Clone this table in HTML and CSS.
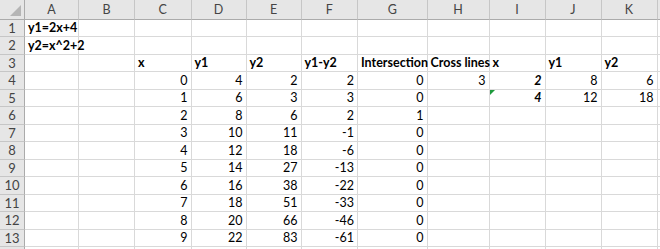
FILE: index.html
```html
<!DOCTYPE html>
<html>
<head>
<meta charset="utf-8">
<link rel="stylesheet" href="styles.css">
</head>
<body>
<div class="sheet">
  <div class="corner"><span class="tri"></span></div>
  <div class="ch">A</div><div class="ch">B</div><div class="ch">C</div><div class="ch">D</div><div class="ch">E</div><div class="ch">F</div><div class="ch">G</div><div class="ch">H</div><div class="ch">I</div><div class="ch">J</div><div class="ch">K</div><div class="ch last"></div>

  <div class="rh">1</div><div class="c b">y1=2x+4</div><div class="c"></div><div class="c"></div><div class="c"></div><div class="c"></div><div class="c"></div><div class="c"></div><div class="c"></div><div class="c"></div><div class="c"></div><div class="c"></div><div class="c"></div>
  <div class="rh">2</div><div class="c b">y2=x^2+2</div><div class="c"></div><div class="c"></div><div class="c"></div><div class="c"></div><div class="c"></div><div class="c"></div><div class="c"></div><div class="c"></div><div class="c"></div><div class="c"></div><div class="c"></div>
  <div class="rh">3</div><div class="c"></div><div class="c"></div><div class="c b">x</div><div class="c b">y1</div><div class="c b">y2</div><div class="c b">y1-y2</div><div class="c b">Intersection</div><div class="c b">Cross lines</div><div class="c b">x</div><div class="c b">y1</div><div class="c b">y2</div><div class="c"></div>
  <div class="rh">4</div><div class="c"></div><div class="c"></div><div class="c n">0</div><div class="c n">4</div><div class="c n">2</div><div class="c n">2</div><div class="c n">0</div><div class="c n">3</div><div class="c n bi">2</div><div class="c n">8</div><div class="c n">6</div><div class="c"></div>
  <div class="rh">5</div><div class="c"></div><div class="c"></div><div class="c n">1</div><div class="c n">6</div><div class="c n">3</div><div class="c n">3</div><div class="c n">0</div><div class="c"></div><div class="c n bi"><span class="flag"></span>4</div><div class="c n">12</div><div class="c n">18</div><div class="c"></div>
  <div class="rh">6</div><div class="c"></div><div class="c"></div><div class="c n">2</div><div class="c n">8</div><div class="c n">6</div><div class="c n">2</div><div class="c n">1</div><div class="c"></div><div class="c"></div><div class="c"></div><div class="c"></div><div class="c"></div>
  <div class="rh">7</div><div class="c"></div><div class="c"></div><div class="c n">3</div><div class="c n">10</div><div class="c n">11</div><div class="c n">-1</div><div class="c n">0</div><div class="c"></div><div class="c"></div><div class="c"></div><div class="c"></div><div class="c"></div>
  <div class="rh">8</div><div class="c"></div><div class="c"></div><div class="c n">4</div><div class="c n">12</div><div class="c n">18</div><div class="c n">-6</div><div class="c n">0</div><div class="c"></div><div class="c"></div><div class="c"></div><div class="c"></div><div class="c"></div>
  <div class="rh">9</div><div class="c"></div><div class="c"></div><div class="c n">5</div><div class="c n">14</div><div class="c n">27</div><div class="c n">-13</div><div class="c n">0</div><div class="c"></div><div class="c"></div><div class="c"></div><div class="c"></div><div class="c"></div>
  <div class="rh">10</div><div class="c"></div><div class="c"></div><div class="c n">6</div><div class="c n">16</div><div class="c n">38</div><div class="c n">-22</div><div class="c n">0</div><div class="c"></div><div class="c"></div><div class="c"></div><div class="c"></div><div class="c"></div>
  <div class="rh">11</div><div class="c"></div><div class="c"></div><div class="c n">7</div><div class="c n">18</div><div class="c n">51</div><div class="c n">-33</div><div class="c n">0</div><div class="c"></div><div class="c"></div><div class="c"></div><div class="c"></div><div class="c"></div>
  <div class="rh">12</div><div class="c"></div><div class="c"></div><div class="c n">8</div><div class="c n">20</div><div class="c n">66</div><div class="c n">-46</div><div class="c n">0</div><div class="c"></div><div class="c"></div><div class="c"></div><div class="c"></div><div class="c"></div>
  <div class="rh">13</div><div class="c"></div><div class="c"></div><div class="c n">9</div><div class="c n">22</div><div class="c n">83</div><div class="c n">-61</div><div class="c n">0</div><div class="c"></div><div class="c"></div><div class="c"></div><div class="c"></div><div class="c"></div>
  <div class="rh"></div><div class="c"></div><div class="c"></div><div class="c"></div><div class="c"></div><div class="c"></div><div class="c"></div><div class="c"></div><div class="c"></div><div class="c"></div><div class="c"></div><div class="c"></div><div class="c"></div>
</div>
</body>
</html>
```

FILE: styles.css
```css
html, body {
  margin: 0;
  padding: 0;
  background: #ffffff;
  overflow: hidden;
}

.sheet {
  display: grid;
  grid-template-columns: 25px 54px 56px 56.5px 55px 55px 56.5px 69.5px 62px 56px 56px 56px 40px;
  grid-template-rows: 19.5px repeat(14, 17.5px);
  font-family: Lato, "Liberation Sans", sans-serif;
  font-size: 12.5px;
  color: #000;
  width: 660px;
  height: 249px;
  overflow: hidden;
}

.corner,
.ch,
.rh {
  background: #e6e6e6;
  color: #444444;
  box-sizing: border-box;
}

.corner {
  position: relative;
  border-right: 1px solid #ababab;
  border-bottom: 1px solid #ababab;
}

.tri {
  position: absolute;
  right: 3px;
  bottom: 3px;
  width: 0;
  height: 0;
  border-left: 11px solid transparent;
  border-bottom: 11px solid #b5b5b5;
}

.ch {
  display: flex;
  align-items: center;
  justify-content: center;
  border-right: 1px solid #c6c6c6;
  border-bottom: 1px solid #ababab;
  font-size: 12.5px;
}

.ch.last {
  border-right: none;
}

.rh {
  display: flex;
  align-items: center;
  justify-content: center;
  border-right: 1px solid #ababab;
  border-bottom: 1px solid #c6c6c6;
  font-size: 13px;
}

.c {
  position: relative;
  box-sizing: border-box;
  border-right: 1px solid #d9d9d9;
  border-bottom: 1px solid #d9d9d9;
  display: flex;
  align-items: flex-end;
  padding: 0 3px 1px 3px;
  white-space: nowrap;
  overflow: visible;
  line-height: 15px;
}

.b {
  font-weight: 700;
  z-index: 1;
}

.n {
  justify-content: flex-end;
}

.bi {
  font-weight: 700;
  font-style: italic;
}

.flag {
  position: absolute;
  left: 0;
  top: 0;
  width: 0;
  height: 0;
  border-top: 5px solid #1d9a3c;
  border-right: 5px solid transparent;
}
```
